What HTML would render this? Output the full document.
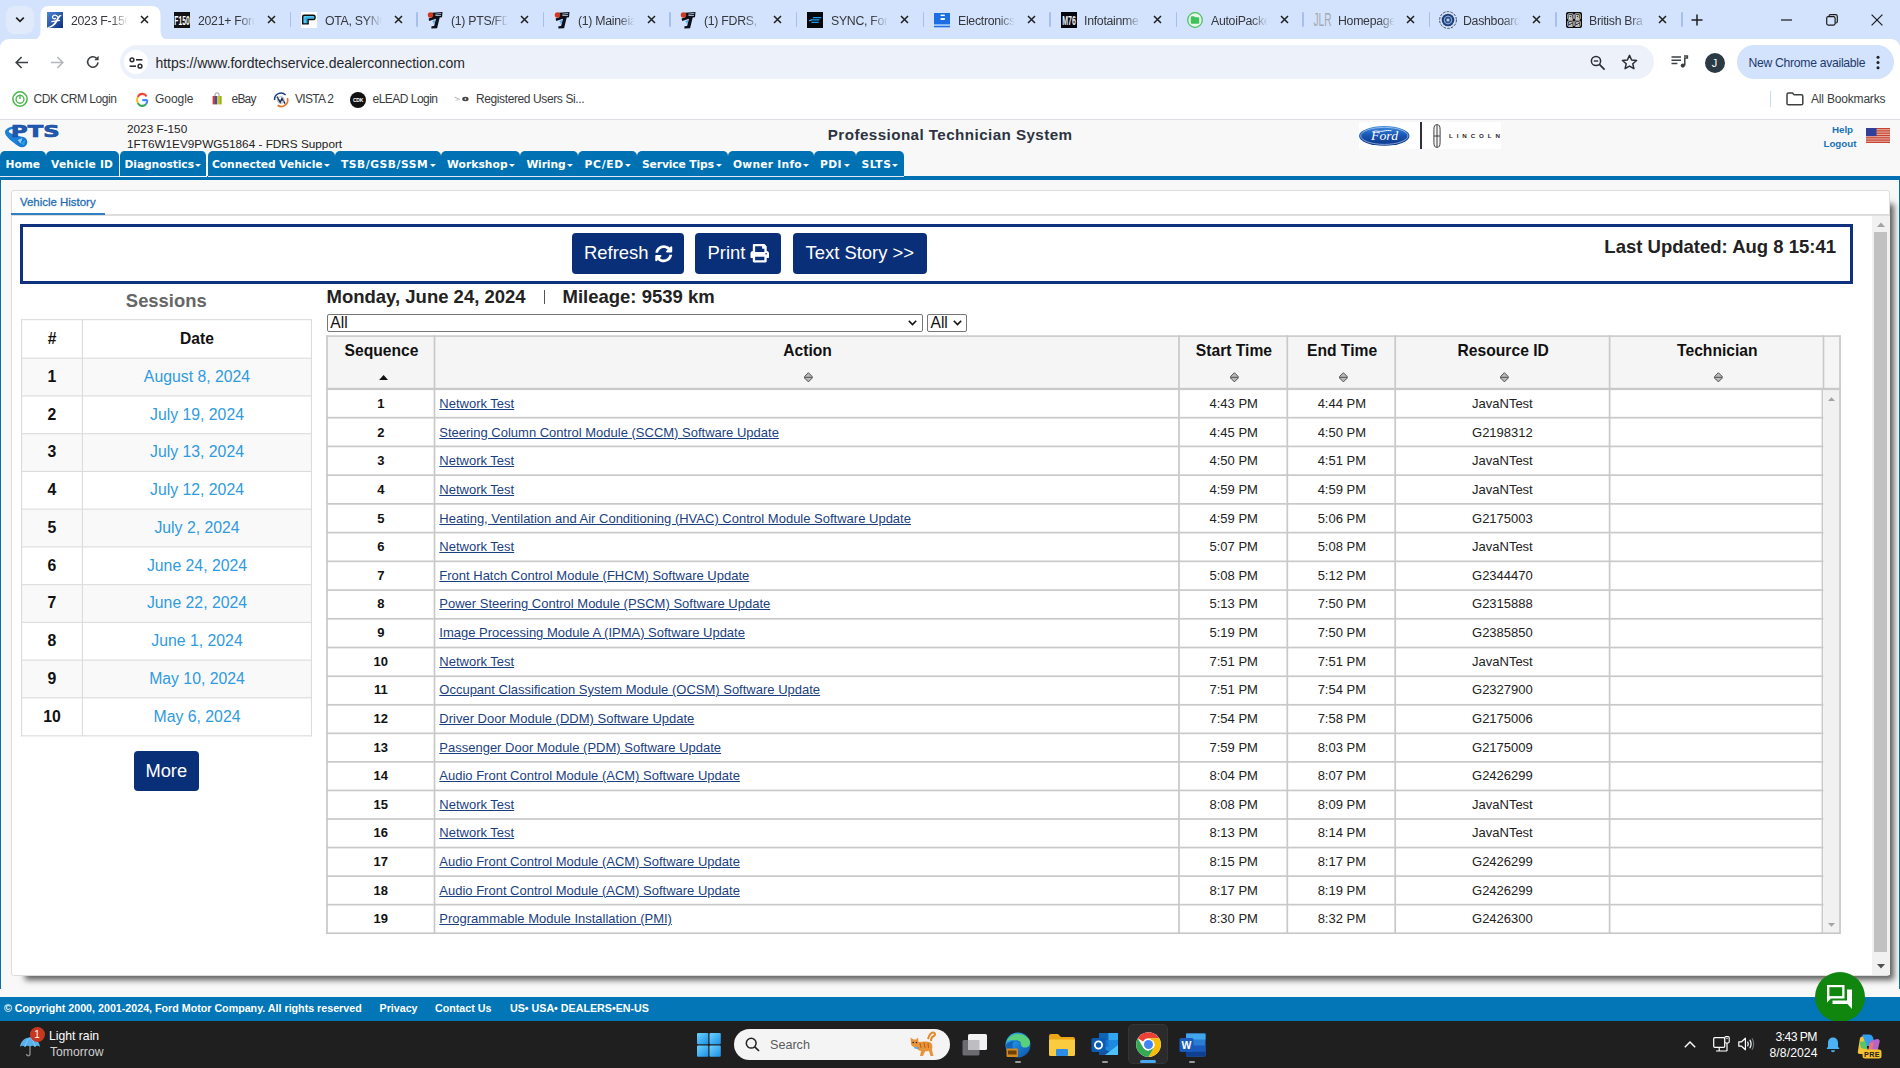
<!DOCTYPE html>
<html lang="en">
<head>
<meta charset="utf-8">
<title>2023 F-150</title>
<style>
*{box-sizing:border-box}
html,body{margin:0;padding:0}
body{width:1900px;height:1068px;overflow:hidden;position:relative;background:#f8f8f8;font-family:"Liberation Sans",sans-serif;color:#000}
.abs{position:absolute}
svg{display:block;overflow:visible}
/* ---------- chrome tab strip ---------- */
#tabbar{position:absolute;left:0;top:0;width:1900px;height:52px;background:#d3e3fd}
#toolbar{position:absolute;left:0;top:39px;width:1900px;height:45px;background:#fff;border-radius:9px 9px 0 0}
#bookmarks{position:absolute;left:0;top:84px;width:1900px;height:36px;background:#fff;border-bottom:1px solid #dcdfe3}
.tt{position:absolute;top:12.8px;height:17px;width:58px;overflow:hidden;font-size:12.3px;line-height:16px;color:#35373b;white-space:nowrap;letter-spacing:-0.28px;-webkit-mask-image:linear-gradient(90deg,#000 0,#000 70%,transparent 98%);mask-image:linear-gradient(90deg,#000 0,#000 70%,transparent 98%)}
.tx{position:absolute;top:15px;width:9px;height:9px}
.sep{position:absolute;top:12px;width:1.5px;height:15px;background:#a6c0ea;border-radius:1px}
.fav{position:absolute;top:12px;width:16px;height:16px}
.bk{position:absolute;top:90.8px;height:17px;font-size:12px;line-height:17px;color:#3a3c40;white-space:nowrap}
/* ---------- page header ---------- */
#pagehead{position:absolute;left:0;top:120px;width:1900px;height:57px;background:#f8f8f8}
#navline{position:absolute;left:0;top:176px;width:1900px;height:4px;background:#0072b4}
.nt{position:absolute;top:151px;height:26px;background:#0072b4;color:#fff;font-family:"DejaVu Sans","Liberation Sans",sans-serif;font-weight:bold;font-size:10.7px;line-height:28.4px;border-radius:5px 5px 0 0;white-space:nowrap;border-bottom:1px solid #d9e9f4}
.nt span{position:absolute;top:0;left:0}
.nt i{position:absolute;top:13.1px;width:0;height:0;border-left:3px solid transparent;border-right:3px solid transparent;border-top:3px solid #fff}
.nt.act{border-left:1px solid #fff;border-right:1px solid #fff;border-bottom:1px solid #fff}
/* ---------- content ---------- */
#leftbar{position:absolute;left:0;top:180px;width:1.3px;height:808.6px;background:#0072b4}
#rightbar{position:absolute;left:1898.7px;top:180px;width:1.3px;height:808.6px;background:#0072b4}
#panel{position:absolute;left:10.6px;top:189.5px;width:1879.2px;height:786.5px;background:#fff;border:1px solid #ddd;border-radius:3px;box-shadow:9px 9px 6px -5px rgba(0,0,0,.62)}
/* ---------- footer / taskbar ---------- */
#footer{position:absolute;left:0;top:997px;width:1900px;height:24px;background:#0276b6;color:#fff;font-weight:bold;font-size:10.7px;line-height:23px;white-space:nowrap}
#footer span{position:absolute;top:0}
#taskbar{position:absolute;left:0;top:1020.5px;width:1900px;height:48px;background:#1f1f20;color:#fff}
</style>
</head>
<body>
<div id="tabbar">
<div class="abs" style="left:6px;top:6px;width:28px;height:28px;border-radius:9px;background:#e1eafb"></div>
<svg class="abs" style="left:15px;top:16px" width="10" height="8" viewBox="0 0 10 8"><path d="M1.2 1.6 L5 5.4 L8.8 1.6" fill="none" stroke="#1f1f1f" stroke-width="1.7"/></svg>
<svg class="abs" style="left:31px;top:6px" width="139" height="34" viewBox="0 0 139 34"><path d="M0 34 C6 34 9.5 31 9.5 25 L9.5 9 C9.5 3 13 0 18 0 L120 0 C126 0 129.5 3 129.5 9 L129.5 25 C129.5 31 133 34 139 34 Z" fill="#fff"/></svg>
<div class="fav" style="left:47px;top:12px;width:16px;height:16px"><svg width="16" height="16" viewBox="0 0 16 16"><defs><linearGradient id="f1" x1="0" y1="0" x2="1" y2="1"><stop offset="0" stop-color="#4a86d8"/><stop offset="1" stop-color="#0e2f7c"/></linearGradient></defs><rect width="16" height="16" fill="url(#f1)"/><path d="M0.300 15.200 C4 14.600 6.500 12.500 8.600 8.800 C9.800 6.700 10.800 4.800 12.400 3.200 L14.800 3 C12.600 4.800 11.600 7 10.400 9.400 C8.400 13.200 5.400 15.600 0.600 16 Z" fill="#fff"/><path d="M10.800 5 C9.800 2.600 6.400 2.400 5.600 4.600 C5 6.400 7 7.400 8.600 6.400 M4.800 9.600 L12.400 8.400" fill="none" stroke="#fff" stroke-width="1.300" stroke-linecap="round"/></svg></div>
<div class="tt" style="left:71px">2023 F-150</div>
<svg class="tx" style="left:139.7px" viewBox="0 0 9 9"><path d="M1 1 L8 8 M8 1 L1 8" stroke="#1f1f1f" stroke-width="1.5" fill="none"/></svg>
<div class="fav" style="left:174px;top:12px;width:16px;height:16px"><svg width="16" height="16" viewBox="0 0 16 16"><rect width="16" height="16" fill="#111"/><text x="8" y="13" text-anchor="middle" font-family="Liberation Sans,sans-serif" font-weight="bold" font-size="13.500" fill="#fff" textLength="15.400" lengthAdjust="spacingAndGlyphs">F150</text></svg></div>
<div class="tt" style="left:198px">2021+ Ford</div>
<svg class="tx" style="left:266.5px" viewBox="0 0 9 9"><path d="M1 1 L8 8 M8 1 L1 8" stroke="#1f1f1f" stroke-width="1.5" fill="none"/></svg>
<div class="fav" style="left:301px;top:12px;width:16px;height:16px"><svg width="16" height="16" viewBox="0 0 16 16"><rect width="16" height="16" fill="#fff"/><path d="M3 2.500 H12.400 Q14.800 2.500 14.800 5.300 Q14.800 8.200 12.400 8.200 H7.800 V12.600 H1 V4.600 Q1 2.500 3 2.500Z" fill="#0c0c0e"/><path d="M3.300 3.900 H12.300 Q13.400 3.900 13.400 5.300 Q13.400 6.800 12.300 6.800 H6.400 V11.200 H2.400 V4.900 Q2.400 3.900 3.300 3.900Z" fill="#52c8f4"/><path d="M2.800 7.400 L5.400 5.400 H12.800 V6.300 H6 L5.800 11 H5 V7.600Z" fill="#1c86c8" opacity="0.650"/></svg></div>
<div class="tt" style="left:325px">OTA, SYNC</div>
<svg class="tx" style="left:393.5px" viewBox="0 0 9 9"><path d="M1 1 L8 8 M8 1 L1 8" stroke="#1f1f1f" stroke-width="1.5" fill="none"/></svg>
<div class="fav" style="left:427px;top:12px;width:16px;height:16px"><svg width="16" height="17" viewBox="0 0 16 17"><path d="M5 0.700 L15.500 0 L15 5.200 L12.700 5.400 L10.100 16.200 L4.300 16.600 L4.500 14.300 L7.100 14 L9 6.700 L2.200 8.900 L1.600 6.500 L5.200 5.200 Z" fill="#0d0f1a"/><path d="M8.400 1.700 L14.200 1.300 L14.150 2.100 L8.400 2.500 Z M8.400 3.300 L14 2.900 L13.950 3.700 L8.400 4.100 Z" fill="#cfe4fb"/><path d="M5.200 9 L8.300 8 L7.100 13.300 L6.300 10.400 Z" fill="#5aa9ec"/><circle cx="3.500" cy="3.100" r="2.750" fill="#d0381f"/></svg></div>
<div class="tt" style="left:451px">(1) PTS/FDR</div>
<svg class="tx" style="left:520px" viewBox="0 0 9 9"><path d="M1 1 L8 8 M8 1 L1 8" stroke="#1f1f1f" stroke-width="1.5" fill="none"/></svg>
<div class="fav" style="left:554px;top:12px;width:16px;height:16px"><svg width="16" height="17" viewBox="0 0 16 17"><path d="M5 0.700 L15.500 0 L15 5.200 L12.700 5.400 L10.100 16.200 L4.300 16.600 L4.500 14.300 L7.100 14 L9 6.700 L2.200 8.900 L1.600 6.500 L5.200 5.200 Z" fill="#0d0f1a"/><path d="M8.400 1.700 L14.200 1.300 L14.150 2.100 L8.400 2.500 Z M8.400 3.300 L14 2.900 L13.950 3.700 L8.400 4.100 Z" fill="#cfe4fb"/><path d="M5.200 9 L8.300 8 L7.100 13.300 L6.300 10.400 Z" fill="#5aa9ec"/><circle cx="3.500" cy="3.100" r="2.750" fill="#d0381f"/></svg></div>
<div class="tt" style="left:578px">(1) Maineia</div>
<svg class="tx" style="left:646.5px" viewBox="0 0 9 9"><path d="M1 1 L8 8 M8 1 L1 8" stroke="#1f1f1f" stroke-width="1.5" fill="none"/></svg>
<div class="fav" style="left:680px;top:12px;width:16px;height:16px"><svg width="16" height="17" viewBox="0 0 16 17"><path d="M5 0.700 L15.500 0 L15 5.200 L12.700 5.400 L10.100 16.200 L4.300 16.600 L4.500 14.300 L7.100 14 L9 6.700 L2.200 8.900 L1.600 6.500 L5.200 5.200 Z" fill="#0d0f1a"/><path d="M8.400 1.700 L14.200 1.300 L14.150 2.100 L8.400 2.500 Z M8.400 3.300 L14 2.900 L13.950 3.700 L8.400 4.100 Z" fill="#cfe4fb"/><path d="M5.200 9 L8.300 8 L7.100 13.300 L6.300 10.400 Z" fill="#5aa9ec"/><circle cx="3.500" cy="3.100" r="2.750" fill="#d0381f"/></svg></div>
<div class="tt" style="left:704px">(1) FDRS, F</div>
<svg class="tx" style="left:773px" viewBox="0 0 9 9"><path d="M1 1 L8 8 M8 1 L1 8" stroke="#1f1f1f" stroke-width="1.5" fill="none"/></svg>
<div class="fav" style="left:807px;top:12px;width:16px;height:16px"><svg width="16" height="16" viewBox="0 0 16 16"><rect width="16" height="16" fill="#08070a"/><path d="M6.200 5 H14.600 L14 6.300 H5.600 Z M4.200 7.300 H12.600 L12.200 8.500 H2 Z M3.600 9.700 H12 L11.400 11 H5 Z" fill="#1f9cf0"/><path d="M1.800 9.600 L6 7.600 L2.400 8.200 Z" fill="#7fd0ff"/></svg></div>
<div class="tt" style="left:831px">SYNC, Ford</div>
<svg class="tx" style="left:899.5px" viewBox="0 0 9 9"><path d="M1 1 L8 8 M8 1 L1 8" stroke="#1f1f1f" stroke-width="1.5" fill="none"/></svg>
<div class="fav" style="left:934px;top:12px;width:16px;height:16px"><svg width="16" height="16" viewBox="0 0 16 16"><rect x="0" y="1" width="16" height="11.500" fill="#1b6fe2"/><rect x="6.600" y="2.600" width="4.200" height="1.500" fill="#fff"/><rect x="6.600" y="6" width="4.200" height="2" fill="#fff"/><rect x="0" y="12.500" width="16" height="1.500" fill="#9cc3f5"/><rect x="0" y="14" width="16" height="1.300" fill="#1b6fe2"/></svg></div>
<div class="tt" style="left:958px">Electronics</div>
<svg class="tx" style="left:1026.5px" viewBox="0 0 9 9"><path d="M1 1 L8 8 M8 1 L1 8" stroke="#1f1f1f" stroke-width="1.5" fill="none"/></svg>
<div class="fav" style="left:1061px;top:12px;width:16px;height:16px"><svg width="16" height="16" viewBox="0 0 16 16"><rect width="16" height="16" fill="#05060d"/><text x="8" y="12.600" text-anchor="middle" font-family="Liberation Sans,sans-serif" font-weight="bold" font-size="12" fill="#f2f2fa" textLength="13.600" lengthAdjust="spacingAndGlyphs">M76</text></svg></div>
<div class="tt" style="left:1084px">Infotainme</div>
<svg class="tx" style="left:1153px" viewBox="0 0 9 9"><path d="M1 1 L8 8 M8 1 L1 8" stroke="#1f1f1f" stroke-width="1.5" fill="none"/></svg>
<div class="fav" style="left:1187px;top:12px;width:16px;height:16px"><svg width="16" height="16" viewBox="0 0 16 16"><circle cx="8" cy="8" r="7.300" fill="#eaf8ec" stroke="#3fc25c" stroke-width="1.200"/><path d="M3.800 5.200 Q3.800 4.200 4.800 4.200 H7 L8 5.200 H11.200 Q12.200 5.200 12.200 6.200 V10.800 Q12.200 11.800 11.200 11.800 H4.800 Q3.800 11.800 3.800 10.800 Z" fill="#3fc25c"/></svg></div>
<div class="tt" style="left:1211px">AutoiPacke</div>
<svg class="tx" style="left:1279.5px" viewBox="0 0 9 9"><path d="M1 1 L8 8 M8 1 L1 8" stroke="#1f1f1f" stroke-width="1.5" fill="none"/></svg>
<div class="fav" style="left:1314px;top:11px;width:18px;height:18px"><svg width="18" height="17" viewBox="0 0 18 17"><text x="-0.500" y="14.600" font-family="Liberation Sans,sans-serif" font-size="17.500" fill="#a4a9b1" textLength="18" lengthAdjust="spacingAndGlyphs">JLR</text></svg></div>
<div class="tt" style="left:1338px">Homepage</div>
<svg class="tx" style="left:1405.5px" viewBox="0 0 9 9"><path d="M1 1 L8 8 M8 1 L1 8" stroke="#1f1f1f" stroke-width="1.5" fill="none"/></svg>
<div class="fav" style="left:1439px;top:11px;width:18px;height:18px"><svg width="18" height="18" viewBox="0 0 18 18"><circle cx="9" cy="9" r="8.400" fill="#d9e2f2" stroke="#2b4a80" stroke-width="1" stroke-dasharray="2.600 1.200"/><circle cx="9" cy="9" r="6.300" fill="#1f3f78"/><circle cx="9" cy="9" r="3.700" fill="none" stroke="#8db0e4" stroke-width="1.100"/><path d="M9 4.400 V13.600 M5 6.700 L13 11.300 M5 11.300 L13 6.700" stroke="#6d93cf" stroke-width="0.600"/><circle cx="9" cy="9" r="1.500" fill="#b9cdee"/></svg></div>
<div class="tt" style="left:1463px">Dashboard</div>
<svg class="tx" style="left:1532px" viewBox="0 0 9 9"><path d="M1 1 L8 8 M8 1 L1 8" stroke="#1f1f1f" stroke-width="1.5" fill="none"/></svg>
<div class="fav" style="left:1566px;top:12px;width:16px;height:16px"><svg width="16" height="16" viewBox="0 0 16 16"><rect width="16" height="16" rx="2" fill="#0c0c0c"/><g fill="none" stroke="#fff" stroke-width="0.800"><rect x="1.800" y="1.800" width="5.400" height="5.600" rx="1"/><rect x="8.800" y="1.800" width="5.400" height="5.600" rx="1"/><rect x="1.800" y="8.800" width="5.400" height="5.600" rx="1"/><rect x="8.800" y="8.800" width="5.400" height="5.600" rx="1"/></g><text x="4.500" y="6.600" text-anchor="middle" font-family="Liberation Sans,sans-serif" font-weight="bold" font-size="5.400" fill="#fff">B</text><text x="11.500" y="6.600" text-anchor="middle" font-family="Liberation Sans,sans-serif" font-weight="bold" font-size="5.400" fill="#fff">B</text><text x="4.500" y="13.600" text-anchor="middle" font-family="Liberation Sans,sans-serif" font-weight="bold" font-size="5.400" fill="#fff">S</text><text x="11.500" y="13.600" text-anchor="middle" font-family="Liberation Sans,sans-serif" font-weight="bold" font-size="5.400" fill="#fff">S</text></svg></div>
<div class="tt" style="left:1589px">British Bra</div>
<svg class="tx" style="left:1658px" viewBox="0 0 9 9"><path d="M1 1 L8 8 M8 1 L1 8" stroke="#1f1f1f" stroke-width="1.5" fill="none"/></svg>
<div class="sep" style="left:289.5px"></div>
<div class="sep" style="left:416px"></div>
<div class="sep" style="left:542.5px"></div>
<div class="sep" style="left:669px"></div>
<div class="sep" style="left:795.5px"></div>
<div class="sep" style="left:922.5px"></div>
<div class="sep" style="left:1049px"></div>
<div class="sep" style="left:1175.5px"></div>
<div class="sep" style="left:1302px"></div>
<div class="sep" style="left:1428.5px"></div>
<div class="sep" style="left:1555px"></div>
<div class="sep" style="left:1681px"></div>
<svg class="abs" style="left:1691px;top:14px" width="12" height="12" viewBox="0 0 12 12"><path d="M6 0.5 V11.5 M0.5 6 H11.5" stroke="#1f1f1f" stroke-width="1.5"/></svg>
<svg class="abs" style="left:1781px;top:19px" width="11" height="2" viewBox="0 0 11 2"><path d="M0 1 H11" stroke="#1a1a1a" stroke-width="1.2"/></svg>
<svg class="abs" style="left:1826px;top:14px" width="12" height="12" viewBox="0 0 12 12"><rect x="0.7" y="2.7" width="8.4" height="8.4" rx="1.5" fill="none" stroke="#1a1a1a" stroke-width="1.2"/><path d="M3 2.7 V2.2 Q3 0.7 4.5 0.7 H9.6 Q11.3 0.7 11.3 2.4 V7.5 Q11.3 9 9.8 9 H9.3" fill="none" stroke="#1a1a1a" stroke-width="1.2"/></svg>
<svg class="abs" style="left:1871px;top:14px" width="12" height="12" viewBox="0 0 12 12"><path d="M0.6 0.6 L11.4 11.4 M11.4 0.6 L0.6 11.4" stroke="#1a1a1a" stroke-width="1.2"/></svg>
</div>
<div id="toolbar">
<svg class="abs" style="left:15px;top:17px" width="14" height="13" viewBox="0 0 14 13"><path d="M13 6.5 H1.6 M6.6 1 L1.2 6.5 L6.6 12" fill="none" stroke="#3c4043" stroke-width="1.6"/></svg>
<svg class="abs" style="left:50px;top:17px" width="14" height="13" viewBox="0 0 14 13"><path d="M1 6.5 H12.4 M7.4 1 L12.8 6.5 L7.4 12" fill="none" stroke="#b4b7bb" stroke-width="1.6"/></svg>
<svg class="abs" style="left:86px;top:16px" width="14" height="14" viewBox="0 0 14 14"><path d="M12 7.4 A5.2 5.2 0 1 1 10.4 3.2" fill="none" stroke="#3c4043" stroke-width="1.6"/><path d="M12.6 0.8 V5.2 H8.2 Z" fill="#3c4043"/></svg>
<div class="abs" style="left:119.5px;top:6px;width:1534px;height:34px;border-radius:17px;background:#edf1fa"></div>
<div class="abs" style="left:123.5px;top:11px;width:24px;height:24px;border-radius:12px;background:#fff"></div>
<svg class="abs" style="left:128.5px;top:17.5px" width="14" height="12" viewBox="0 0 14 12"><circle cx="3" cy="2.8" r="1.9" fill="none" stroke="#2b2d31" stroke-width="1.5"/><path d="M7 2.8 H13.4" stroke="#2b2d31" stroke-width="1.6"/><circle cx="11" cy="9.2" r="1.9" fill="none" stroke="#2b2d31" stroke-width="1.5"/><path d="M0.6 9.2 H7" stroke="#2b2d31" stroke-width="1.6"/></svg>
<div class="abs" style="left:155.5px;top:14.5px;font-size:14px;line-height:18px;color:#26282c;white-space:nowrap;letter-spacing:-0.04px">https://www.fordtechservice.dealerconnection.com</div>
<svg class="abs" style="left:1590px;top:16px" width="16" height="16" viewBox="0 0 16 16"><circle cx="6" cy="6" r="4.6" fill="none" stroke="#2b2d31" stroke-width="1.5"/><path d="M9.4 9.4 L14.6 14.6" stroke="#2b2d31" stroke-width="1.7"/><path d="M3.8 6 H8.2" stroke="#2b2d31" stroke-width="1.4"/></svg>
<svg class="abs" style="left:1621px;top:15px" width="17" height="16" viewBox="0 0 17 16"><path d="M8.5 1.4 L10.6 6 L15.6 6.5 L11.8 9.8 L12.9 14.7 L8.5 12.1 L4.1 14.7 L5.2 9.8 L1.4 6.5 L6.4 6 Z" fill="none" stroke="#2b2d31" stroke-width="1.5" stroke-linejoin="round"/></svg>
<svg class="abs" style="left:1671px;top:16px" width="17" height="14" viewBox="0 0 17 14"><path d="M0.5 2 H10 M0.5 5.2 H10 M0.5 8.4 H6.4" stroke="#3c4043" stroke-width="1.5"/><path d="M13 1 H16.4 V3 H13.8 V10.4" stroke="#3c4043" stroke-width="1.5" fill="none"/><circle cx="11.8" cy="10.6" r="2.1" fill="#3c4043"/></svg>
<div class="abs" style="left:1704.5px;top:13.5px;width:20px;height:20px;border-radius:10px;background:#2c3a44;color:#fff;font-size:11px;line-height:20px;text-align:center">J</div>
<div class="abs" style="left:1737px;top:6px;width:157px;height:34px;border-radius:17px;background:#d3e3fd"></div>
<div class="abs" style="left:1748.5px;top:15.6px;font-size:12.2px;line-height:17px;color:#1d3a6c;white-space:nowrap;letter-spacing:-0.295px">New Chrome available</div>
<svg class="abs" style="left:1876px;top:16px" width="4" height="16" viewBox="0 0 4 16"><circle cx="2" cy="2.2" r="1.5" fill="#1f1f1f"/><circle cx="2" cy="7.5" r="1.5" fill="#1f1f1f"/><circle cx="2" cy="12.8" r="1.5" fill="#1f1f1f"/></svg>
</div>
<div id="bookmarks"></div>
<div class="bk" style="left:33.5px;letter-spacing:-0.434px">CDK CRM Login</div>
<div class="bk" style="left:155px;letter-spacing:-0.041px">Google</div>
<div class="bk" style="left:231.5px;letter-spacing:-0.786px">eBay</div>
<div class="bk" style="left:295px;letter-spacing:-0.69px">VISTA 2</div>
<div class="bk" style="left:372.5px;letter-spacing:-0.522px">eLEAD Login</div>
<div class="bk" style="left:476px;letter-spacing:-0.391px">Registered Users Si...</div>
<svg class="abs" style="left:11.8px;top:91px" width="16" height="16" viewBox="0 0 17 17"><circle cx="8.5" cy="8.5" r="7.6" fill="#fff" stroke="#48b648" stroke-width="1.6"/><circle cx="8.5" cy="8.8" r="4.2" fill="none" stroke="#48b648" stroke-width="1.4"/><path d="M8.5 3.6 V8.6" stroke="#48b648" stroke-width="1.4"/><path d="M5.6 6.4 A3.6 3.6 0 0 0 11.4 6.4" stroke="#fff" stroke-width="0" fill="none"/></svg>
<svg class="abs" style="left:135.5px;top:92.6px" width="12.2" height="14" viewBox="0 0 14 14" preserveAspectRatio="none"><path d="M13 7.1 H7.2" stroke="#4285f4" stroke-width="2.2"/><path d="M12.2 3.4 A6 6 0 0 0 2 4" fill="none" stroke="#ea4335" stroke-width="2.2"/><path d="M2 4 A6 6 0 0 0 2 10" fill="none" stroke="#fbbc05" stroke-width="2.2"/><path d="M2 10 A6 6 0 0 0 11.4 11.2" fill="none" stroke="#34a853" stroke-width="2.2"/><path d="M11.4 11.2 A6 6 0 0 0 13 7.1" fill="none" stroke="#4285f4" stroke-width="2.2"/></svg>
<svg class="abs" style="left:212px;top:92px" width="10" height="13" viewBox="0 0 10 13"><path d="M3 4 V2.6 Q3 0.8 5 0.8 Q7 0.8 7 2.6 V4" fill="none" stroke="#8a8a8a" stroke-width="0.9"/><rect x="0.6" y="4" width="2.4" height="8.4" fill="#e53238"/><rect x="3" y="4" width="2.2" height="8.4" fill="#0064d2"/><rect x="5.2" y="4" width="2.2" height="8.4" fill="#f5af02"/><rect x="7.4" y="4" width="2.2" height="8.4" fill="#86b817"/></svg>
<svg class="abs" style="left:273px;top:91px" width="16" height="17" viewBox="0 0 16 17"><path d="M1.6 9 A6.4 6.4 0 0 1 12.6 4" fill="none" stroke="#1d3f8a" stroke-width="1.5"/><path d="M14.4 7 A6.4 6.4 0 0 1 4.6 14.2" fill="none" stroke="#e2762a" stroke-width="1.7"/><path d="M4 5.6 L7.2 11.4 L9 7.6 L12 12.6" fill="none" stroke="#1b2a55" stroke-width="1.5"/><circle cx="7.8" cy="9" r="3.4" fill="none" stroke="#9aa3b8" stroke-width="0.8"/></svg>
<div class="abs" style="left:350px;top:91.5px;width:16px;height:16px;border-radius:8px;background:#111"></div><div class="abs" style="left:350px;top:91.5px;width:16px;height:16px;line-height:16px;text-align:center;font-size:5px;font-weight:bold;color:#fff;letter-spacing:-0.2px">CDK</div>
<svg class="abs" style="left:454px;top:95px" width="16" height="8" viewBox="0 0 16 8"><path d="M0.5 2.2 L5.5 4.2" stroke="#a8a8a8" stroke-width="0.9"/><path d="M1.5 5.2 L6 4.6" stroke="#bdbdbd" stroke-width="0.8"/><ellipse cx="11.4" cy="4" rx="3.2" ry="2.2" fill="#444"/><circle cx="11.4" cy="4" r="0.9" fill="#ddd"/></svg>
<div class="abs" style="left:1769.5px;top:91px;width:1.5px;height:16px;background:#c5d8f3"></div>
<svg class="abs" style="left:1786px;top:92px" width="18" height="14" viewBox="0 0 18 14"><path d="M1 2.4 Q1 1 2.4 1 H6.4 L8.2 2.8 H15.4 Q16.8 2.8 16.8 4.2 V11.4 Q16.8 12.8 15.4 12.8 H2.4 Q1 12.8 1 11.4 Z" fill="none" stroke="#3c4043" stroke-width="1.5"/></svg>
<div class="bk" style="left:1811px;letter-spacing:-0.182px">All Bookmarks</div>
<div id="pagehead">
<svg class="abs" style="left:0;top:0" width="64" height="32" viewBox="0 0 64 32">
<path d="M14.5 6.300 C9 6.800 5 9.300 5 12.200 C5 16 11.500 21.500 18.500 26.200 L23.500 17.300 C16 15.200 9 13.200 8.800 11.400 C8.700 10 11 9.200 13.200 8.900 Z" fill="#1b82d8"/>
<circle cx="22" cy="22" r="5.300" fill="#1878d2"/><path d="M17.500 20 L22.500 18 L20.500 23.500 Z" fill="#8fd0f8"/><path d="M20.500 23.500 L25.500 19.500 L24 25.500 Z" fill="#2f9ae8"/>
<text x="11" y="16.500" font-family="DejaVu Sans,Liberation Sans,sans-serif" font-weight="bold" font-size="16.700" fill="#2059b4" stroke="#1d4c9c" stroke-width="0.700" textLength="48.5" lengthAdjust="spacingAndGlyphs">PTS</text>
</svg>
<div class="abs" style="left:127px;top:1.3px;font-size:11.78px;line-height:15px;color:#222;white-space:nowrap">2023 F-150<br>1FT6W1EV9PWG51864 - FDRS Support</div>
<div class="abs" style="left:827.8px;top:5.4px;font-size:15.2px;line-height:20px;font-weight:bold;color:#2d3440;white-space:nowrap;letter-spacing:0.43px">Professional Technician System</div>
<div class="abs" style="left:1359px;top:2px;width:141.5px;height:27px;background:#fff"></div>
<svg class="abs" style="left:1358.800px;top:5.600px" width="51" height="20" viewBox="0 0 51 20">
<defs><linearGradient id="fg" x1="0" y1="0" x2="0" y2="1"><stop offset="0" stop-color="#3f8fe2"/><stop offset="0.450" stop-color="#1a57b4"/><stop offset="1" stop-color="#0a3488"/></linearGradient></defs>
<ellipse cx="25.300" cy="9.900" rx="25.200" ry="9.900" fill="url(#fg)"/><ellipse cx="25.300" cy="9.900" rx="23.600" ry="8.500" fill="none" stroke="#b7cdec" stroke-width="0.700"/>
<text x="25.600" y="13.600" text-anchor="middle" font-family="Liberation Serif,serif" font-style="italic" font-size="13.500" fill="#fff" textLength="27" lengthAdjust="spacingAndGlyphs">Ford</text>
<path d="M13.500 5.600 C17 4.200 21 6 24 5.200 C27 4.400 30 4.200 32.500 4.800" stroke="#fff" stroke-width="0.900" fill="none"/>
</svg>
<div class="abs" style="left:1420px;top:2px;width:2px;height:27px;background:#30303a"></div>
<svg class="abs" style="left:1432.500px;top:3.800px" width="8" height="24" viewBox="0 0 8 24">
<rect x="0.900" y="0.600" width="6.200" height="22.800" rx="2.800" ry="5" fill="#f4f4f4" stroke="#2a2a2a" stroke-width="0.900"/>
<path d="M3.500 0.800 V23.200 M4.500 0.800 V23.200" stroke="#2a2a2a" stroke-width="0.450"/><path d="M1.200 12 H6.800" stroke="#2a2a2a" stroke-width="0.900"/></svg>
<div class="abs" style="left:1449px;top:11.200px;font-size:6.200px;line-height:9px;font-weight:bold;color:#2a2a2a;white-space:nowrap;letter-spacing:3.917px">LINCOLN</div>
<div class="abs" style="left:1812.5px;top:3.2px;width:60px;text-align:center;font-size:9.8px;line-height:13.6px;font-weight:bold;color:#1873b9;white-space:nowrap">Help</div>
<div class="abs" style="left:1810px;top:16.8px;width:60px;text-align:center;font-size:9.8px;line-height:13.6px;font-weight:bold;color:#1873b9;white-space:nowrap">Logout</div>
<svg class="abs" style="left:1866px;top:8px" width="24" height="15" viewBox="0 0 24 15">
<rect width="24" height="15" fill="#e8b0a8"/>
<g fill="#c8442e"><rect y="0" width="24" height="1.2"/><rect y="2.3" width="24" height="1.2"/><rect y="4.6" width="24" height="1.2"/><rect y="6.9" width="24" height="1.2"/><rect y="9.2" width="24" height="1.2"/><rect y="11.5" width="24" height="1.2"/><rect y="13.8" width="24" height="1.2"/></g>
<rect width="10.5" height="8.1" fill="#2f3f9a"/></svg>
</div>
<div id="navline"></div>
<div class="nt" style="left:0px;width:46.0px"><span style="left:5.5px;letter-spacing:-0.057px">Home</span></div>
<div class="nt" style="left:46px;width:72.5px"><span style="left:5.0px;letter-spacing:0.219px">Vehicle ID</span></div>
<div class="nt act" style="left:119px;width:87.5px"><span style="left:4.5px;letter-spacing:-0.069px">Diagnostics</span><i style="left:74.5px"></i></div>
<div class="nt" style="left:207.5px;width:127.5px"><span style="left:4.5px;letter-spacing:-0.042px">Connected Vehicle</span><i style="left:116.0px"></i></div>
<div class="nt" style="left:335px;width:106.0px"><span style="left:6.0px;letter-spacing:0.559px">TSB/GSB/SSM</span><i style="left:94.5px"></i></div>
<div class="nt" style="left:441px;width:79.0px"><span style="left:6.0px;letter-spacing:0.072px">Workshop</span><i style="left:67.5px"></i></div>
<div class="nt" style="left:520px;width:58.0px"><span style="left:6.4px;letter-spacing:-0.091px">Wiring</span><i style="left:46.5px"></i></div>
<div class="nt" style="left:578px;width:59.0px"><span style="left:6.5px;letter-spacing:0.734px">PC/ED</span><i style="left:46.5px"></i></div>
<div class="nt" style="left:637px;width:91.0px"><span style="left:5.0px;letter-spacing:-0.102px">Service Tips</span><i style="left:78.5px"></i></div>
<div class="nt" style="left:728px;width:86.0px"><span style="left:5.0px;letter-spacing:0.257px">Owner Info</span><i style="left:74.5px"></i></div>
<div class="nt" style="left:814px;width:42.0px"><span style="left:6.0px;letter-spacing:0.406px">PDI</span><i style="left:29.5px"></i></div>
<div class="nt" style="left:856px;width:48.0px"><span style="left:5.4px;letter-spacing:0.622px">SLTS</span><i style="left:35.5px"></i></div>
<div id="leftbar"></div><div id="rightbar"></div>
<div id="panel"></div>
<div class="abs" style="left:11px;top:214px;width:1878px;height:1.5px;background:#ddd"></div>
<div class="abs" style="left:11px;top:213.3px;width:94px;height:2px;background:#2f7fc1"></div>
<div class="abs" style="left:20px;top:195px;font-size:11.45px;line-height:14px;color:#1f6fb2;white-space:nowrap;-webkit-text-stroke:0.3px #1f6fb2">Vehicle History</div>
<div class="abs" style="left:1872px;top:216px;width:17.5px;height:758.5px;background:#f1f1f1"></div>
<div class="abs" style="left:1874.3px;top:232px;width:12.6px;height:720px;background:#c1c1c1"></div>
<svg class="abs" style="left:1877px;top:222px" width="8" height="5" viewBox="0 0 8 5"><path d="M0 5 L4 0.6 L8 5 Z" fill="#a3a3a3"/></svg>
<svg class="abs" style="left:1877px;top:963.5px" width="8" height="5" viewBox="0 0 8 5"><path d="M0 0 L4 4.4 L8 0 Z" fill="#505050"/></svg>
<div class="abs" style="left:20px;top:224px;width:1833px;height:59.5px;border:3px solid #10317d;background:#fff"></div>
<div style="position:absolute;top:233px;height:41px;background:#0a2f79;border-radius:4px;color:#fff;font-size:18.45px;line-height:40.8px;white-space:nowrap;left:572px;width:112px"><span class="abs" style="left:12px">Refresh</span></div>
<svg class="abs" style="left:654px;top:244.5px" width="19.5" height="17.5" viewBox="0 0 512 512"><path fill="#fff" d="M370.72 133.28C339.458 104.008 298.888 87.962 255.848 88c-77.458.068-144.328 53.178-162.791 126.85-1.344 5.363-6.122 9.15-11.651 9.15H24.103c-7.498 0-13.194-6.807-11.807-14.176C33.933 94.924 134.813 8 256 8c66.448 0 126.791 26.136 171.315 68.685L463.03 40.97C478.149 25.851 504 36.559 504 57.941V192c0 13.255-10.745 24-24 24H345.941c-21.382 0-32.09-25.851-16.971-40.971l41.75-41.749zM32 296h134.059c21.382 0 32.09 25.851 16.971 40.971l-41.75 41.75c31.262 29.273 71.835 45.319 114.876 45.28 77.418-.07 144.315-53.144 162.787-126.849 1.344-5.363 6.122-9.15 11.651-9.15h57.304c7.498 0 13.194 6.807 11.807 14.176C478.067 417.076 377.187 504 256 504c-66.448 0-126.791-26.136-171.315-68.685L48.97 471.03C33.851 486.149 8 475.441 8 454.059V320c0-13.255 10.745-24 24-24z"/></svg>
<div style="position:absolute;top:233px;height:41px;background:#0a2f79;border-radius:4px;color:#fff;font-size:18.45px;line-height:40.8px;white-space:nowrap;left:695px;width:86px"><span class="abs" style="left:12.5px">Print</span></div>
<svg class="abs" style="left:750px;top:244px" width="19.5" height="18.5" viewBox="0 0 512 512"><path fill="#fff" d="M448 192V77.250c0-8.490-3.370-16.620-9.370-22.630L393.370 9.370c-6-6-14.140-9.370-22.630-9.370H96C78.330 0 64 14.330 64 32v160c-35.350 0-64 28.650-64 64v112c0 8.840 7.160 16 16 16h48v96c0 17.670 14.330 32 32 32h320c17.670 0 32-14.330 32-32v-96h48c8.840 0 16-7.160 16-16V256c0-35.350-28.650-64-64-64zm-64 256H128v-96h256v96zm0-224H128V64h192v48c0 8.840 7.160 16 16 16h48v96zm48 72c-13.250 0-24-10.750-24-24 0-13.260 10.750-24 24-24s24 10.740 24 24c0 13.250-10.750 24-24 24z"/></svg>
<div style="position:absolute;top:233px;height:41px;background:#0a2f79;border-radius:4px;color:#fff;font-size:18.45px;line-height:40.8px;white-space:nowrap;left:792.5px;width:134px"><span class="abs" style="left:13px">Text Story &gt;&gt;</span></div>
<div class="abs" style="left:1536px;top:235.5px;width:300px;text-align:right;font-size:18.5px;line-height:22px;font-weight:bold;color:#222;white-space:nowrap">Last Updated: Aug 8 15:41</div>
<div class="abs" style="left:21px;top:290px;width:290.5px;text-align:center;font-size:18.4px;line-height:22px;font-weight:bold;color:#666;white-space:nowrap">Sessions</div>
<svg class="abs" style="left:0;top:0" width="400" height="800" viewBox="0 0 400 800"><rect x="21.5" y="319.5" width="290" height="416.3" fill="#fff"/><rect x="21.5" y="358.20" width="290" height="37.74" fill="#f9f9f9"/><rect x="21.5" y="433.68" width="290" height="37.74" fill="#f9f9f9"/><rect x="21.5" y="509.16" width="290" height="37.74" fill="#f9f9f9"/><rect x="21.5" y="584.64" width="290" height="37.74" fill="#f9f9f9"/><rect x="21.5" y="660.12" width="290" height="37.74" fill="#f9f9f9"/><g fill="#dcdcdc"><rect x="21" y="319.1" width="291" height="1.1"/><rect x="21" y="357.65" width="291" height="1.1"/><rect x="21" y="395.39" width="291" height="1.1"/><rect x="21" y="433.13" width="291" height="1.1"/><rect x="21" y="470.87" width="291" height="1.1"/><rect x="21" y="508.61" width="291" height="1.1"/><rect x="21" y="546.35" width="291" height="1.1"/><rect x="21" y="584.09" width="291" height="1.1"/><rect x="21" y="621.83" width="291" height="1.1"/><rect x="21" y="659.57" width="291" height="1.1"/><rect x="21" y="697.31" width="291" height="1.1"/><rect x="21" y="735.3" width="291" height="1.1"/><rect x="21" y="319.1" width="1.1" height="417.3"/><rect x="81.9" y="319.1" width="1.1" height="417.3"/><rect x="310.9" y="319.1" width="1.1" height="417.3"/></g></svg>
<div class="abs" style="left:22px;top:325.3px;width:60px;height:27px;line-height:27px;text-align:center;font-size:15.6px;font-weight:bold;color:#111">#</div>
<div class="abs" style="left:83px;top:325.3px;width:228px;height:27px;line-height:27px;text-align:center;font-size:15.6px;font-weight:bold;color:#111">Date</div>
<div class="abs" style="left:22px;top:363.05px;width:60px;height:27px;line-height:27px;text-align:center;font-size:15.8px;font-weight:bold;color:#111">1</div>
<div class="abs" style="left:83px;top:363.05px;width:228px;height:27px;line-height:27px;text-align:center;font-size:15.8px;color:#2f9be0;white-space:nowrap">August 8, 2024</div>
<div class="abs" style="left:22px;top:400.77px;width:60px;height:27px;line-height:27px;text-align:center;font-size:15.8px;font-weight:bold;color:#111">2</div>
<div class="abs" style="left:83px;top:400.77px;width:228px;height:27px;line-height:27px;text-align:center;font-size:15.8px;color:#2f9be0;white-space:nowrap">July 19, 2024</div>
<div class="abs" style="left:22px;top:438.49px;width:60px;height:27px;line-height:27px;text-align:center;font-size:15.8px;font-weight:bold;color:#111">3</div>
<div class="abs" style="left:83px;top:438.49px;width:228px;height:27px;line-height:27px;text-align:center;font-size:15.8px;color:#2f9be0;white-space:nowrap">July 13, 2024</div>
<div class="abs" style="left:22px;top:476.21px;width:60px;height:27px;line-height:27px;text-align:center;font-size:15.8px;font-weight:bold;color:#111">4</div>
<div class="abs" style="left:83px;top:476.21px;width:228px;height:27px;line-height:27px;text-align:center;font-size:15.8px;color:#2f9be0;white-space:nowrap">July 12, 2024</div>
<div class="abs" style="left:22px;top:513.93px;width:60px;height:27px;line-height:27px;text-align:center;font-size:15.8px;font-weight:bold;color:#111">5</div>
<div class="abs" style="left:83px;top:513.93px;width:228px;height:27px;line-height:27px;text-align:center;font-size:15.8px;color:#2f9be0;white-space:nowrap">July 2, 2024</div>
<div class="abs" style="left:22px;top:551.65px;width:60px;height:27px;line-height:27px;text-align:center;font-size:15.8px;font-weight:bold;color:#111">6</div>
<div class="abs" style="left:83px;top:551.65px;width:228px;height:27px;line-height:27px;text-align:center;font-size:15.8px;color:#2f9be0;white-space:nowrap">June 24, 2024</div>
<div class="abs" style="left:22px;top:589.37px;width:60px;height:27px;line-height:27px;text-align:center;font-size:15.8px;font-weight:bold;color:#111">7</div>
<div class="abs" style="left:83px;top:589.37px;width:228px;height:27px;line-height:27px;text-align:center;font-size:15.8px;color:#2f9be0;white-space:nowrap">June 22, 2024</div>
<div class="abs" style="left:22px;top:627.09px;width:60px;height:27px;line-height:27px;text-align:center;font-size:15.8px;font-weight:bold;color:#111">8</div>
<div class="abs" style="left:83px;top:627.09px;width:228px;height:27px;line-height:27px;text-align:center;font-size:15.8px;color:#2f9be0;white-space:nowrap">June 1, 2024</div>
<div class="abs" style="left:22px;top:664.81px;width:60px;height:27px;line-height:27px;text-align:center;font-size:15.8px;font-weight:bold;color:#111">9</div>
<div class="abs" style="left:83px;top:664.81px;width:228px;height:27px;line-height:27px;text-align:center;font-size:15.8px;color:#2f9be0;white-space:nowrap">May 10, 2024</div>
<div class="abs" style="left:22px;top:702.53px;width:60px;height:27px;line-height:27px;text-align:center;font-size:15.8px;font-weight:bold;color:#111">10</div>
<div class="abs" style="left:83px;top:702.53px;width:228px;height:27px;line-height:27px;text-align:center;font-size:15.8px;color:#2f9be0;white-space:nowrap">May 6, 2024</div>
<div class="abs" style="left:133.5px;top:750.5px;width:65.5px;height:40.5px;background:#0a2f79;border-radius:4px;color:#fff;font-size:18.3px;line-height:39.5px;text-align:center">More</div>
<div class="abs" style="left:326.5px;top:286px;font-size:18.5px;line-height:22px;font-weight:bold;color:#222;white-space:nowrap">Monday, June 24, 2024</div>
<div class="abs" style="left:544px;top:290px;width:1.2px;height:13.5px;background:#555"></div>
<div class="abs" style="left:562.5px;top:286px;font-size:18.5px;line-height:22px;font-weight:bold;color:#222;white-space:nowrap">Mileage: 9539 km</div>
<div class="abs" style="left:327px;top:314px;width:595.5px;height:18px;border:1px solid #767676;border-radius:2px;background:#fff"></div>
<div class="abs" style="left:330.3px;top:314.3px;font-size:15.6px;line-height:18px;color:#111">All</div>
<svg class="abs" style="left:908px;top:320px" width="9" height="6" viewBox="0 0 9 6"><path d="M0.8 0.8 L4.5 4.6 L8.2 0.8" fill="none" stroke="#111" stroke-width="1.6"/></svg>
<div class="abs" style="left:927px;top:314px;width:40px;height:18px;border:1px solid #767676;border-radius:2px;background:#fff"></div>
<div class="abs" style="left:930.5px;top:314.3px;font-size:15.6px;line-height:18px;color:#111">All</div>
<svg class="abs" style="left:952.5px;top:320px" width="9" height="6" viewBox="0 0 9 6"><path d="M0.8 0.8 L4.5 4.6 L8.2 0.8" fill="none" stroke="#111" stroke-width="1.6"/></svg>
<div class="abs" style="left:327px;top:336px;width:1513.5px;height:53px;background:#f5f5f5"></div>
<div class="abs" style="left:1823.5px;top:390px;width:17px;height:543.5px;background:#f1f1f1"></div>
<svg class="abs" style="left:1827.5px;top:396.5px" width="7" height="4" viewBox="0 0 7 4"><path d="M0 4 L3.5 0.3 L7 4 Z" fill="#a3a3a3"/></svg>
<svg class="abs" style="left:1827.5px;top:922.5px" width="7" height="4" viewBox="0 0 7 4"><path d="M0 0 L3.5 3.7 L7 0 Z" fill="#a3a3a3"/></svg>
<svg class="abs" style="left:0;top:0" width="1900" height="1068" viewBox="0 0 1900 1068"><g fill="#c9c9c9"><rect x="326.40" y="335.30" width="1514.30" height="1.60"/><rect x="326.40" y="387.80" width="1514.30" height="2.30"/><rect x="326.40" y="416.83" width="1497.00" height="1.70"/><rect x="326.40" y="445.56" width="1497.00" height="1.70"/><rect x="326.40" y="474.29" width="1497.00" height="1.70"/><rect x="326.40" y="503.02" width="1497.00" height="1.70"/><rect x="326.40" y="531.75" width="1497.00" height="1.70"/><rect x="326.40" y="560.48" width="1497.00" height="1.70"/><rect x="326.40" y="589.21" width="1497.00" height="1.70"/><rect x="326.40" y="617.94" width="1497.00" height="1.70"/><rect x="326.40" y="646.67" width="1497.00" height="1.70"/><rect x="326.40" y="675.40" width="1497.00" height="1.70"/><rect x="326.40" y="703.95" width="1497.00" height="1.70"/><rect x="326.40" y="732.50" width="1497.00" height="1.70"/><rect x="326.40" y="761.05" width="1497.00" height="1.70"/><rect x="326.40" y="789.60" width="1497.00" height="1.70"/><rect x="326.40" y="818.15" width="1497.00" height="1.70"/><rect x="326.40" y="846.70" width="1497.00" height="1.70"/><rect x="326.40" y="875.25" width="1497.00" height="1.70"/><rect x="326.40" y="903.80" width="1497.00" height="1.70"/><rect x="326.40" y="932.35" width="1514.30" height="1.70"/><rect x="326.15" y="335.30" width="1.70" height="598.70"/><rect x="433.65" y="335.30" width="1.70" height="598.70"/><rect x="1178.15" y="335.30" width="1.70" height="598.70"/><rect x="1286.45" y="335.30" width="1.70" height="598.70"/><rect x="1394.35" y="335.30" width="1.70" height="598.70"/><rect x="1608.75" y="335.30" width="1.70" height="598.70"/><rect x="1822.70" y="335.30" width="1.60" height="54.00"/><rect x="1821.60" y="389.00" width="1.60" height="544.50"/><rect x="1839.15" y="335.30" width="1.70" height="598.70"/></g></svg>
<div class="abs" style="left:327.8px;top:340.9px;width:107.5px;text-align:center;font-size:15.65px;line-height:20px;font-weight:bold;color:#111;white-space:nowrap">Sequence</div>
<svg class="abs" style="left:379.1px;top:375.1px" width="9.2" height="5" viewBox="0 0 8 4.5"><path d="M0 4.5 L4 0 L8 4.5 Z" fill="#111"/></svg>
<div class="abs" style="left:435.3px;top:340.9px;width:744.5px;text-align:center;font-size:15.65px;line-height:20px;font-weight:bold;color:#111;white-space:nowrap">Action</div>
<svg class="abs" style="left:804.0px;top:372.4px" width="8.8" height="10.6" viewBox="0 0 8.4 10"><path d="M4.2 0.6 L7.8 4.2 V5.8 L4.2 9.4 L0.6 5.8 V4.2 Z" fill="#b9b9b9" stroke="#4a4a4a" stroke-width="0.9" stroke-linejoin="round"/><path d="M0.8 5 H7.6" stroke="#4a4a4a" stroke-width="0.9"/></svg>
<div class="abs" style="left:1179.8px;top:340.9px;width:108.3px;text-align:center;font-size:15.65px;line-height:20px;font-weight:bold;color:#111;white-space:nowrap">Start Time</div>
<svg class="abs" style="left:1230.4px;top:372.4px" width="8.8" height="10.6" viewBox="0 0 8.4 10"><path d="M4.2 0.6 L7.8 4.2 V5.8 L4.2 9.4 L0.6 5.8 V4.2 Z" fill="#b9b9b9" stroke="#4a4a4a" stroke-width="0.9" stroke-linejoin="round"/><path d="M0.8 5 H7.6" stroke="#4a4a4a" stroke-width="0.9"/></svg>
<div class="abs" style="left:1288.1px;top:340.9px;width:107.9px;text-align:center;font-size:15.65px;line-height:20px;font-weight:bold;color:#111;white-space:nowrap">End Time</div>
<svg class="abs" style="left:1338.5px;top:372.4px" width="8.8" height="10.6" viewBox="0 0 8.4 10"><path d="M4.2 0.6 L7.8 4.2 V5.8 L4.2 9.4 L0.6 5.8 V4.2 Z" fill="#b9b9b9" stroke="#4a4a4a" stroke-width="0.9" stroke-linejoin="round"/><path d="M0.8 5 H7.6" stroke="#4a4a4a" stroke-width="0.9"/></svg>
<div class="abs" style="left:1396.0px;top:340.9px;width:214.4px;text-align:center;font-size:15.65px;line-height:20px;font-weight:bold;color:#111;white-space:nowrap">Resource ID</div>
<svg class="abs" style="left:1499.6px;top:372.4px" width="8.8" height="10.6" viewBox="0 0 8.4 10"><path d="M4.2 0.6 L7.8 4.2 V5.8 L4.2 9.4 L0.6 5.8 V4.2 Z" fill="#b9b9b9" stroke="#4a4a4a" stroke-width="0.9" stroke-linejoin="round"/><path d="M0.8 5 H7.6" stroke="#4a4a4a" stroke-width="0.9"/></svg>
<div class="abs" style="left:1610.3999999999999px;top:340.9px;width:213.9px;text-align:center;font-size:15.65px;line-height:20px;font-weight:bold;color:#111;white-space:nowrap">Technician</div>
<svg class="abs" style="left:1713.8px;top:372.4px" width="8.8" height="10.6" viewBox="0 0 8.4 10"><path d="M4.2 0.6 L7.8 4.2 V5.8 L4.2 9.4 L0.6 5.8 V4.2 Z" fill="#b9b9b9" stroke="#4a4a4a" stroke-width="0.9" stroke-linejoin="round"/><path d="M0.8 5 H7.6" stroke="#4a4a4a" stroke-width="0.9"/></svg>
<div class="abs" style="left:327px;top:396.20px;width:107.5px;text-align:center;font-size:13px;line-height:16px;white-space:nowrap;font-weight:bold;color:#111">1</div>
<div class="abs" style="left:439.3px;top:396.20px;font-size:13px;line-height:16px;white-space:nowrap;color:#1b3f7f;text-decoration:underline">Network Test</div>
<div class="abs" style="left:1179.6px;top:396.20px;width:108.3px;text-align:center;font-size:13px;line-height:16px;white-space:nowrap;color:#222">4:43 PM</div>
<div class="abs" style="left:1287.9px;top:396.20px;width:107.9px;text-align:center;font-size:13px;line-height:16px;white-space:nowrap;color:#222">4:44 PM</div>
<div class="abs" style="left:1395.2px;top:396.20px;width:214.4px;text-align:center;font-size:13px;line-height:16px;white-space:nowrap;color:#222">JavaNTest</div>
<div class="abs" style="left:327px;top:424.81px;width:107.5px;text-align:center;font-size:13px;line-height:16px;white-space:nowrap;font-weight:bold;color:#111">2</div>
<div class="abs" style="left:439.3px;top:424.81px;font-size:13px;line-height:16px;white-space:nowrap;color:#1b3f7f;text-decoration:underline">Steering Column Control Module (SCCM) Software Update</div>
<div class="abs" style="left:1179.6px;top:424.81px;width:108.3px;text-align:center;font-size:13px;line-height:16px;white-space:nowrap;color:#222">4:45 PM</div>
<div class="abs" style="left:1287.9px;top:424.81px;width:107.9px;text-align:center;font-size:13px;line-height:16px;white-space:nowrap;color:#222">4:50 PM</div>
<div class="abs" style="left:1395.2px;top:424.81px;width:214.4px;text-align:center;font-size:13px;line-height:16px;white-space:nowrap;color:#222">G2198312</div>
<div class="abs" style="left:327px;top:453.42px;width:107.5px;text-align:center;font-size:13px;line-height:16px;white-space:nowrap;font-weight:bold;color:#111">3</div>
<div class="abs" style="left:439.3px;top:453.42px;font-size:13px;line-height:16px;white-space:nowrap;color:#1b3f7f;text-decoration:underline">Network Test</div>
<div class="abs" style="left:1179.6px;top:453.42px;width:108.3px;text-align:center;font-size:13px;line-height:16px;white-space:nowrap;color:#222">4:50 PM</div>
<div class="abs" style="left:1287.9px;top:453.42px;width:107.9px;text-align:center;font-size:13px;line-height:16px;white-space:nowrap;color:#222">4:51 PM</div>
<div class="abs" style="left:1395.2px;top:453.42px;width:214.4px;text-align:center;font-size:13px;line-height:16px;white-space:nowrap;color:#222">JavaNTest</div>
<div class="abs" style="left:327px;top:482.03px;width:107.5px;text-align:center;font-size:13px;line-height:16px;white-space:nowrap;font-weight:bold;color:#111">4</div>
<div class="abs" style="left:439.3px;top:482.03px;font-size:13px;line-height:16px;white-space:nowrap;color:#1b3f7f;text-decoration:underline">Network Test</div>
<div class="abs" style="left:1179.6px;top:482.03px;width:108.3px;text-align:center;font-size:13px;line-height:16px;white-space:nowrap;color:#222">4:59 PM</div>
<div class="abs" style="left:1287.9px;top:482.03px;width:107.9px;text-align:center;font-size:13px;line-height:16px;white-space:nowrap;color:#222">4:59 PM</div>
<div class="abs" style="left:1395.2px;top:482.03px;width:214.4px;text-align:center;font-size:13px;line-height:16px;white-space:nowrap;color:#222">JavaNTest</div>
<div class="abs" style="left:327px;top:510.64px;width:107.5px;text-align:center;font-size:13px;line-height:16px;white-space:nowrap;font-weight:bold;color:#111">5</div>
<div class="abs" style="left:439.3px;top:510.64px;font-size:13px;line-height:16px;white-space:nowrap;color:#1b3f7f;text-decoration:underline">Heating, Ventilation and Air Conditioning (HVAC) Control Module Software Update</div>
<div class="abs" style="left:1179.6px;top:510.64px;width:108.3px;text-align:center;font-size:13px;line-height:16px;white-space:nowrap;color:#222">4:59 PM</div>
<div class="abs" style="left:1287.9px;top:510.64px;width:107.9px;text-align:center;font-size:13px;line-height:16px;white-space:nowrap;color:#222">5:06 PM</div>
<div class="abs" style="left:1395.2px;top:510.64px;width:214.4px;text-align:center;font-size:13px;line-height:16px;white-space:nowrap;color:#222">G2175003</div>
<div class="abs" style="left:327px;top:539.25px;width:107.5px;text-align:center;font-size:13px;line-height:16px;white-space:nowrap;font-weight:bold;color:#111">6</div>
<div class="abs" style="left:439.3px;top:539.25px;font-size:13px;line-height:16px;white-space:nowrap;color:#1b3f7f;text-decoration:underline">Network Test</div>
<div class="abs" style="left:1179.6px;top:539.25px;width:108.3px;text-align:center;font-size:13px;line-height:16px;white-space:nowrap;color:#222">5:07 PM</div>
<div class="abs" style="left:1287.9px;top:539.25px;width:107.9px;text-align:center;font-size:13px;line-height:16px;white-space:nowrap;color:#222">5:08 PM</div>
<div class="abs" style="left:1395.2px;top:539.25px;width:214.4px;text-align:center;font-size:13px;line-height:16px;white-space:nowrap;color:#222">JavaNTest</div>
<div class="abs" style="left:327px;top:567.86px;width:107.5px;text-align:center;font-size:13px;line-height:16px;white-space:nowrap;font-weight:bold;color:#111">7</div>
<div class="abs" style="left:439.3px;top:567.86px;font-size:13px;line-height:16px;white-space:nowrap;color:#1b3f7f;text-decoration:underline">Front Hatch Control Module (FHCM) Software Update</div>
<div class="abs" style="left:1179.6px;top:567.86px;width:108.3px;text-align:center;font-size:13px;line-height:16px;white-space:nowrap;color:#222">5:08 PM</div>
<div class="abs" style="left:1287.9px;top:567.86px;width:107.9px;text-align:center;font-size:13px;line-height:16px;white-space:nowrap;color:#222">5:12 PM</div>
<div class="abs" style="left:1395.2px;top:567.86px;width:214.4px;text-align:center;font-size:13px;line-height:16px;white-space:nowrap;color:#222">G2344470</div>
<div class="abs" style="left:327px;top:596.47px;width:107.5px;text-align:center;font-size:13px;line-height:16px;white-space:nowrap;font-weight:bold;color:#111">8</div>
<div class="abs" style="left:439.3px;top:596.47px;font-size:13px;line-height:16px;white-space:nowrap;color:#1b3f7f;text-decoration:underline">Power Steering Control Module (PSCM) Software Update</div>
<div class="abs" style="left:1179.6px;top:596.47px;width:108.3px;text-align:center;font-size:13px;line-height:16px;white-space:nowrap;color:#222">5:13 PM</div>
<div class="abs" style="left:1287.9px;top:596.47px;width:107.9px;text-align:center;font-size:13px;line-height:16px;white-space:nowrap;color:#222">7:50 PM</div>
<div class="abs" style="left:1395.2px;top:596.47px;width:214.4px;text-align:center;font-size:13px;line-height:16px;white-space:nowrap;color:#222">G2315888</div>
<div class="abs" style="left:327px;top:625.08px;width:107.5px;text-align:center;font-size:13px;line-height:16px;white-space:nowrap;font-weight:bold;color:#111">9</div>
<div class="abs" style="left:439.3px;top:625.08px;font-size:13px;line-height:16px;white-space:nowrap;color:#1b3f7f;text-decoration:underline">Image Processing Module A (IPMA) Software Update</div>
<div class="abs" style="left:1179.6px;top:625.08px;width:108.3px;text-align:center;font-size:13px;line-height:16px;white-space:nowrap;color:#222">5:19 PM</div>
<div class="abs" style="left:1287.9px;top:625.08px;width:107.9px;text-align:center;font-size:13px;line-height:16px;white-space:nowrap;color:#222">7:50 PM</div>
<div class="abs" style="left:1395.2px;top:625.08px;width:214.4px;text-align:center;font-size:13px;line-height:16px;white-space:nowrap;color:#222">G2385850</div>
<div class="abs" style="left:327px;top:653.69px;width:107.5px;text-align:center;font-size:13px;line-height:16px;white-space:nowrap;font-weight:bold;color:#111">10</div>
<div class="abs" style="left:439.3px;top:653.69px;font-size:13px;line-height:16px;white-space:nowrap;color:#1b3f7f;text-decoration:underline">Network Test</div>
<div class="abs" style="left:1179.6px;top:653.69px;width:108.3px;text-align:center;font-size:13px;line-height:16px;white-space:nowrap;color:#222">7:51 PM</div>
<div class="abs" style="left:1287.9px;top:653.69px;width:107.9px;text-align:center;font-size:13px;line-height:16px;white-space:nowrap;color:#222">7:51 PM</div>
<div class="abs" style="left:1395.2px;top:653.69px;width:214.4px;text-align:center;font-size:13px;line-height:16px;white-space:nowrap;color:#222">JavaNTest</div>
<div class="abs" style="left:327px;top:682.30px;width:107.5px;text-align:center;font-size:13px;line-height:16px;white-space:nowrap;font-weight:bold;color:#111">11</div>
<div class="abs" style="left:439.3px;top:682.30px;font-size:13px;line-height:16px;white-space:nowrap;color:#1b3f7f;text-decoration:underline">Occupant Classification System Module (OCSM) Software Update</div>
<div class="abs" style="left:1179.6px;top:682.30px;width:108.3px;text-align:center;font-size:13px;line-height:16px;white-space:nowrap;color:#222">7:51 PM</div>
<div class="abs" style="left:1287.9px;top:682.30px;width:107.9px;text-align:center;font-size:13px;line-height:16px;white-space:nowrap;color:#222">7:54 PM</div>
<div class="abs" style="left:1395.2px;top:682.30px;width:214.4px;text-align:center;font-size:13px;line-height:16px;white-space:nowrap;color:#222">G2327900</div>
<div class="abs" style="left:327px;top:710.91px;width:107.5px;text-align:center;font-size:13px;line-height:16px;white-space:nowrap;font-weight:bold;color:#111">12</div>
<div class="abs" style="left:439.3px;top:710.91px;font-size:13px;line-height:16px;white-space:nowrap;color:#1b3f7f;text-decoration:underline">Driver Door Module (DDM) Software Update</div>
<div class="abs" style="left:1179.6px;top:710.91px;width:108.3px;text-align:center;font-size:13px;line-height:16px;white-space:nowrap;color:#222">7:54 PM</div>
<div class="abs" style="left:1287.9px;top:710.91px;width:107.9px;text-align:center;font-size:13px;line-height:16px;white-space:nowrap;color:#222">7:58 PM</div>
<div class="abs" style="left:1395.2px;top:710.91px;width:214.4px;text-align:center;font-size:13px;line-height:16px;white-space:nowrap;color:#222">G2175006</div>
<div class="abs" style="left:327px;top:739.52px;width:107.5px;text-align:center;font-size:13px;line-height:16px;white-space:nowrap;font-weight:bold;color:#111">13</div>
<div class="abs" style="left:439.3px;top:739.52px;font-size:13px;line-height:16px;white-space:nowrap;color:#1b3f7f;text-decoration:underline">Passenger Door Module (PDM) Software Update</div>
<div class="abs" style="left:1179.6px;top:739.52px;width:108.3px;text-align:center;font-size:13px;line-height:16px;white-space:nowrap;color:#222">7:59 PM</div>
<div class="abs" style="left:1287.9px;top:739.52px;width:107.9px;text-align:center;font-size:13px;line-height:16px;white-space:nowrap;color:#222">8:03 PM</div>
<div class="abs" style="left:1395.2px;top:739.52px;width:214.4px;text-align:center;font-size:13px;line-height:16px;white-space:nowrap;color:#222">G2175009</div>
<div class="abs" style="left:327px;top:768.13px;width:107.5px;text-align:center;font-size:13px;line-height:16px;white-space:nowrap;font-weight:bold;color:#111">14</div>
<div class="abs" style="left:439.3px;top:768.13px;font-size:13px;line-height:16px;white-space:nowrap;color:#1b3f7f;text-decoration:underline">Audio Front Control Module (ACM) Software Update</div>
<div class="abs" style="left:1179.6px;top:768.13px;width:108.3px;text-align:center;font-size:13px;line-height:16px;white-space:nowrap;color:#222">8:04 PM</div>
<div class="abs" style="left:1287.9px;top:768.13px;width:107.9px;text-align:center;font-size:13px;line-height:16px;white-space:nowrap;color:#222">8:07 PM</div>
<div class="abs" style="left:1395.2px;top:768.13px;width:214.4px;text-align:center;font-size:13px;line-height:16px;white-space:nowrap;color:#222">G2426299</div>
<div class="abs" style="left:327px;top:796.74px;width:107.5px;text-align:center;font-size:13px;line-height:16px;white-space:nowrap;font-weight:bold;color:#111">15</div>
<div class="abs" style="left:439.3px;top:796.74px;font-size:13px;line-height:16px;white-space:nowrap;color:#1b3f7f;text-decoration:underline">Network Test</div>
<div class="abs" style="left:1179.6px;top:796.74px;width:108.3px;text-align:center;font-size:13px;line-height:16px;white-space:nowrap;color:#222">8:08 PM</div>
<div class="abs" style="left:1287.9px;top:796.74px;width:107.9px;text-align:center;font-size:13px;line-height:16px;white-space:nowrap;color:#222">8:09 PM</div>
<div class="abs" style="left:1395.2px;top:796.74px;width:214.4px;text-align:center;font-size:13px;line-height:16px;white-space:nowrap;color:#222">JavaNTest</div>
<div class="abs" style="left:327px;top:825.35px;width:107.5px;text-align:center;font-size:13px;line-height:16px;white-space:nowrap;font-weight:bold;color:#111">16</div>
<div class="abs" style="left:439.3px;top:825.35px;font-size:13px;line-height:16px;white-space:nowrap;color:#1b3f7f;text-decoration:underline">Network Test</div>
<div class="abs" style="left:1179.6px;top:825.35px;width:108.3px;text-align:center;font-size:13px;line-height:16px;white-space:nowrap;color:#222">8:13 PM</div>
<div class="abs" style="left:1287.9px;top:825.35px;width:107.9px;text-align:center;font-size:13px;line-height:16px;white-space:nowrap;color:#222">8:14 PM</div>
<div class="abs" style="left:1395.2px;top:825.35px;width:214.4px;text-align:center;font-size:13px;line-height:16px;white-space:nowrap;color:#222">JavaNTest</div>
<div class="abs" style="left:327px;top:853.96px;width:107.5px;text-align:center;font-size:13px;line-height:16px;white-space:nowrap;font-weight:bold;color:#111">17</div>
<div class="abs" style="left:439.3px;top:853.96px;font-size:13px;line-height:16px;white-space:nowrap;color:#1b3f7f;text-decoration:underline">Audio Front Control Module (ACM) Software Update</div>
<div class="abs" style="left:1179.6px;top:853.96px;width:108.3px;text-align:center;font-size:13px;line-height:16px;white-space:nowrap;color:#222">8:15 PM</div>
<div class="abs" style="left:1287.9px;top:853.96px;width:107.9px;text-align:center;font-size:13px;line-height:16px;white-space:nowrap;color:#222">8:17 PM</div>
<div class="abs" style="left:1395.2px;top:853.96px;width:214.4px;text-align:center;font-size:13px;line-height:16px;white-space:nowrap;color:#222">G2426299</div>
<div class="abs" style="left:327px;top:882.57px;width:107.5px;text-align:center;font-size:13px;line-height:16px;white-space:nowrap;font-weight:bold;color:#111">18</div>
<div class="abs" style="left:439.3px;top:882.57px;font-size:13px;line-height:16px;white-space:nowrap;color:#1b3f7f;text-decoration:underline">Audio Front Control Module (ACM) Software Update</div>
<div class="abs" style="left:1179.6px;top:882.57px;width:108.3px;text-align:center;font-size:13px;line-height:16px;white-space:nowrap;color:#222">8:17 PM</div>
<div class="abs" style="left:1287.9px;top:882.57px;width:107.9px;text-align:center;font-size:13px;line-height:16px;white-space:nowrap;color:#222">8:19 PM</div>
<div class="abs" style="left:1395.2px;top:882.57px;width:214.4px;text-align:center;font-size:13px;line-height:16px;white-space:nowrap;color:#222">G2426299</div>
<div class="abs" style="left:327px;top:911.18px;width:107.5px;text-align:center;font-size:13px;line-height:16px;white-space:nowrap;font-weight:bold;color:#111">19</div>
<div class="abs" style="left:439.3px;top:911.18px;font-size:13px;line-height:16px;white-space:nowrap;color:#1b3f7f;text-decoration:underline">Programmable Module Installation (PMI)</div>
<div class="abs" style="left:1179.6px;top:911.18px;width:108.3px;text-align:center;font-size:13px;line-height:16px;white-space:nowrap;color:#222">8:30 PM</div>
<div class="abs" style="left:1287.9px;top:911.18px;width:107.9px;text-align:center;font-size:13px;line-height:16px;white-space:nowrap;color:#222">8:32 PM</div>
<div class="abs" style="left:1395.2px;top:911.18px;width:214.4px;text-align:center;font-size:13px;line-height:16px;white-space:nowrap;color:#222">G2426300</div>
<div id="footer"><span style="left:4px">© Copyright 2000, 2001-2024, Ford Motor Company. All rights reserved</span><span style="left:379.5px">Privacy</span><span style="left:435px">Contact Us</span><span style="left:510px">US• USA• DEALERS•EN-US</span></div>
<div class="abs" style="left:1815px;top:972px;width:49.5px;height:49.5px;border-radius:25px;background:#10860f"></div>
<svg class="abs" style="left:1826px;top:984px" width="27" height="26" viewBox="0 0 27 26">
<path d="M1 1 H18.5 V14.5 H5 L1 18.5 Z" fill="#fff"/><rect x="3.4" y="3.2" width="12.8" height="8.9" fill="#10860f"/>
<path d="M21 5.5 H26 V25 L21.5 20 H6.5 V16.5 H21 Z" fill="#fff"/></svg>
<div id="taskbar">
<svg class="abs" style="left:18.5px;top:14px" width="22" height="22" viewBox="0 0 24 24">
<path d="M1 13 C2 6 7 2.6 12 2.6 C17 2.6 22 6 23 13 C21.4 11.2 19 11.2 17.5 13 C16 11.2 13.5 11.2 12 13 C10.500 11.2 8 11.2 6.500 13 C5 11.2 2.600 11.2 1 13 Z" fill="#5ab0ec"/>
<path d="M12 2.6 C9 5 7.500 9 6.500 13 M12 2.6 C15 5 16.500 9 17.500 13" stroke="#8fd0fa" stroke-width="0.8" fill="none"/>
<path d="M12 12.5 V20.5 Q12 22.6 10 22.6 Q8.200 22.600 8.200 20.800" stroke="#8a8a8a" stroke-width="1.5" fill="none"/></svg>
<div class="abs" style="left:29.5px;top:6px;width:15px;height:15px;border-radius:8px;background:#c8371f;color:#fff;font-size:10px;line-height:15px;text-align:center">1</div>
<div class="abs" style="left:49px;top:8.8px;font-size:12.2px;line-height:15px;color:#fff;white-space:nowrap">Light rain</div>
<div class="abs" style="left:50px;top:24.5px;font-size:12.2px;line-height:15px;color:#d0d0d0;white-space:nowrap">Tomorrow</div>
<svg class="abs" style="left:697px;top:12.500px" width="24" height="24" viewBox="0 0 24 24"><defs><linearGradient id="wg" x1="0" y1="0" x2="1" y2="1"><stop offset="0" stop-color="#6fd2fb"/><stop offset="1" stop-color="#1a8fe8"/></linearGradient></defs>
<rect x="0" y="0" width="11.300" height="11.300" rx="1" fill="url(#wg)"/><rect x="12.500" y="0" width="11.300" height="11.300" rx="1" fill="url(#wg)"/><rect x="0" y="12.500" width="11.300" height="11.300" rx="1" fill="url(#wg)"/><rect x="12.500" y="12.500" width="11.300" height="11.300" rx="1" fill="url(#wg)"/></svg>
<div class="abs" style="left:734px;top:8.5px;width:216px;height:30.5px;border-radius:15.5px;background:#f4f4f4"></div>
<svg class="abs" style="left:744.500px;top:16px" width="15" height="15" viewBox="0 0 15 15"><circle cx="6.200" cy="6.200" r="4.900" fill="none" stroke="#222" stroke-width="1.500"/><path d="M9.800 9.800 L14 14" stroke="#222" stroke-width="1.700"/></svg>
<div class="abs" style="left:770px;top:16.3px;font-size:12.6px;line-height:16px;color:#5b5b5b;white-space:nowrap">Search</div>
<svg class="abs" style="left:906px;top:9px" width="32" height="28" viewBox="0 0 32 28">
<path d="M22 9 C23 4 26.500 1.500 28.500 3 C29.800 4 28.500 6 27 6.500 C26 7 25 8.500 25 11" fill="none" stroke="#e08a2c" stroke-width="2"/>
<path d="M5 12 L4.500 7.500 L7.500 9.500 L10 9.500 L12 7.500 L12.500 12 C16 11.500 21 11 24.500 12.500 C27 14 26.500 18 26 20 L27.500 26 L24.500 26 L23 21 L19 21.500 L17 26 L14 26 L15 21 C12 20.500 11 19 10.500 17 C7 17.500 4.500 15.500 5 12 Z" fill="#e8943a"/>
<path d="M14 13 L15 18 M18 12.500 L19 18 M22 13 L22.500 18" stroke="#b9651a" stroke-width="1.100"/>
<path d="M8 17 L13 17.500 L12.500 19 L8.500 18.500 Z" fill="#4aa3df"/>
<circle cx="7.200" cy="12.500" r="0.800" fill="#222"/><circle cx="10.400" cy="12.500" r="0.800" fill="#222"/></svg>
<svg class="abs" style="left:962px;top:12px" width="26" height="24" viewBox="0 0 26 24"><rect x="0.500" y="7" width="17" height="15.500" rx="1.500" fill="#6b6b70"/><rect x="6" y="1" width="19" height="16" rx="1.500" fill="#f2f2f2"/><rect x="6" y="7" width="11.500" height="10" fill="#bdbdc2"/></svg>
<svg class="abs" style="left:1004px;top:10px" width="28" height="28" viewBox="0 0 28 28"><defs><linearGradient id="eg" x1="0" y1="0" x2="1" y2="1"><stop offset="0" stop-color="#36c3e8"/><stop offset="0.500" stop-color="#1b7fd6"/><stop offset="1" stop-color="#0c54a8"/></linearGradient></defs>
<circle cx="14" cy="14" r="12.500" fill="url(#eg)"/><path d="M3 10 C6 2.500 18 0 24.500 7.500 C26.500 10 26.500 13 25 15 C22 18 16.500 16.500 17 13 C15 8.500 7 8 3 10 Z" fill="#58d07c"/><path d="M17 13 C17 9.500 12 8 9.500 11 C7 14.500 9 21 15 23.500 C9 25 2.500 21 2 14 C4 10 14 8 17 13 Z" fill="#1463b8"/>
<rect x="2.500" y="17.500" width="11.500" height="8.500" rx="1" fill="#d28a1e"/><rect x="4" y="19.500" width="8.500" height="4" fill="#6e3f0c"/></svg>
<svg class="abs" style="left:1047.500px;top:12px" width="28" height="24" viewBox="0 0 28 24"><path d="M1 3 Q1 1 3 1 H10 L13 4 H25 Q27 4 27 6 V9 H1 Z" fill="#e9a616"/><rect x="1" y="6.500" width="26" height="16.500" rx="1.500" fill="#fbcb3f"/><rect x="8" y="16" width="12" height="7" rx="1" fill="#2d8de6"/></svg>
<svg class="abs" style="left:1091px;top:11px" width="28" height="26" viewBox="0 0 28 26"><rect x="8" y="1" width="19" height="22" rx="1.500" fill="#1b8ae0"/><rect x="8" y="1" width="9.500" height="7" fill="#0f64b8"/><rect x="17.500" y="1" width="9.500" height="7" fill="#32a6f0"/><rect x="8" y="8" width="9.500" height="7" fill="#1574cc"/><path d="M8 15 L27 23 H8 Z" fill="#1256a4"/><path d="M27 13 L14 23 H27 Z" fill="#4fc0f8"/><rect x="0.500" y="6" width="14" height="14" rx="1.500" fill="#0b5cb0"/><circle cx="7.500" cy="13" r="3.600" fill="none" stroke="#fff" stroke-width="1.800"/></svg>
<div class="abs" style="left:1128px;top:3.5px;width:40px;height:40px;border-radius:5px;background:#2c2b2b;border:1px solid #363535"></div>
<svg class="abs" style="left:1135px;top:10px" width="27" height="27" viewBox="0 0 48 48"><circle cx="24" cy="24" r="22" fill="#fff"/><path d="M24 2 A22 22 0 0 1 43.050 13 H24 A11 11 0 0 0 14.470 18.500 L4.950 13 A22 22 0 0 1 24 2Z" fill="#ea4335"/><path d="M43.050 13 A22 22 0 0 1 24 46 L33.530 29.500 A11 11 0 0 0 33.530 18.500 L24 13Z" fill="#fbbc05"/><path d="M24 46 A22 22 0 0 1 4.950 13 L14.470 29.500 A11 11 0 0 0 24 35 L33.530 29.500Z" fill="#34a853"/><circle cx="24" cy="24" r="10" fill="#fff"/><circle cx="24" cy="24" r="8" fill="#4285f4"/></svg>
<div class="abs" style="left:1140px;top:39.8px;width:16px;height:3px;border-radius:1.500px;background:#4aa8f0"></div>
<svg class="abs" style="left:1179px;top:12px" width="27" height="24" viewBox="0 0 27 24"><rect x="7" y="0.500" width="19.500" height="23" rx="1.500" fill="#2b7cd3"/><rect x="7" y="0.500" width="19.500" height="6" fill="#41a5ee"/><rect x="7" y="12.500" width="19.500" height="6" fill="#185abd"/><rect x="7" y="18.500" width="19.500" height="5" fill="#103f91"/><rect x="0.500" y="5" width="14" height="14" rx="1.500" fill="#185abd"/><text x="7.500" y="16" text-anchor="middle" font-family="Liberation Sans,sans-serif" font-weight="bold" font-size="10.500" fill="#fff">W</text></svg>
<div class="abs" style="left:1015px;top:40px;width:6px;height:2.5px;border-radius:1.300px;background:#9a9a9a"></div>
<div class="abs" style="left:1102px;top:40px;width:6px;height:2.5px;border-radius:1.300px;background:#9a9a9a"></div>
<div class="abs" style="left:1189px;top:40px;width:6px;height:2.5px;border-radius:1.300px;background:#9a9a9a"></div>
<svg class="abs" style="left:1684px;top:20.500px" width="12" height="7" viewBox="0 0 12 7"><path d="M0.800 6.200 L6 1 L11.200 6.200" fill="none" stroke="#fff" stroke-width="1.400"/></svg>
<svg class="abs" style="left:1713px;top:15.500px" width="18" height="17" viewBox="0 0 18 17"><rect x="0.700" y="1.700" width="11" height="9.600" rx="1" fill="none" stroke="#fff" stroke-width="1.200"/><path d="M6.200 11.300 V14.800 M3 15 H14 M14 7 V15" stroke="#fff" stroke-width="1.200" fill="none"/><rect x="11.800" y="0.600" width="4.400" height="6.400" rx="1.200" fill="#1d1e20" stroke="#fff" stroke-width="1.100"/><path d="M13.300 2.600 H14.700" stroke="#fff" stroke-width="1"/></svg>
<svg class="abs" style="left:1737.500px;top:16px" width="17" height="14" viewBox="0 0 17 14"><path d="M0.800 4.800 H3.600 L7.400 1.200 V12.800 L3.600 9.200 H0.800 Z" fill="none" stroke="#fff" stroke-width="1.200" stroke-linejoin="round"/><path d="M9.600 4.600 Q11 7 9.600 9.400 M11.800 2.800 Q14.400 7 11.800 11.200" stroke="#fff" stroke-width="1.200" fill="none"/><path d="M14 1.200 Q17.400 7 14 12.800" stroke="#6f7a80" stroke-width="1.100" fill="none"/></svg>
<div class="abs" style="left:1740px;top:9px;width:77.500px;text-align:right;font-size:12.2px;line-height:15px;color:#fff;white-space:nowrap"><span style="letter-spacing:-0.565px">3:43 P</span>M</div>
<div class="abs" style="left:1740px;top:25px;width:77.500px;text-align:right;font-size:12.2px;line-height:15px;color:#fff;white-space:nowrap"><span style="letter-spacing:0.078px">8/8/202</span>4</div>
<svg class="abs" style="left:1825.500px;top:16px" width="14" height="16" viewBox="0 0 14 16"><path d="M7 0.500 C3.600 0.500 2 3 2 6 V9.500 L0.500 12 H13.500 L12 9.500 V6 C12 3 10.400 0.500 7 0.500 Z" fill="#4cb2f6"/><path d="M5 13.200 A2 2 0 0 0 9 13.200 Z" fill="#4cb2f6"/></svg>
<svg class="abs" style="left:1856px;top:12.500px" width="26" height="26" viewBox="0 0 26 26"><path d="M7 1.500 H13 Q16 1.500 17 4.500 L19.500 13 H10 L6.500 4 Q6 1.500 7 1.500 Z" fill="#2f9df0"/><path d="M4 5 Q5 3 7 3.500 L11.500 16.500 L9 21 H4 Q1 21 2 17.500 Z" fill="#f3c33a"/><path d="M3.500 9 L9.500 8 L11.500 16.500 L5 15 Z" fill="#5bc468"/><path d="M14 8 L21 6 Q24.500 6 23.500 9.500 L21.500 18 Q20.500 21 17.500 21 H12 Z" fill="#b565c8"/><path d="M13.500 10 L18 9 L16 18 L12 19 Z" fill="#e8747c"/><rect x="6.500" y="16.500" width="19" height="9" rx="2.500" fill="#f5c02e"/><text x="16" y="23.800" text-anchor="middle" font-family="Liberation Sans,sans-serif" font-weight="bold" font-size="7.200" fill="#222" letter-spacing="0.400">PRE</text></svg>
</div>
</body>
</html>
